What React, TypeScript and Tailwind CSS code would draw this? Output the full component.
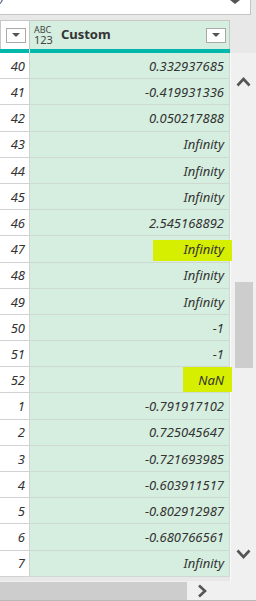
import React from "react";

const rows: { i: number; v: string; hl?: "inf" | "nan" }[] = [
  { i: 40, v: "0.332937685" },
  { i: 41, v: "-0.419931336" },
  { i: 42, v: "0.050217888" },
  { i: 43, v: "Infinity" },
  { i: 44, v: "Infinity" },
  { i: 45, v: "Infinity" },
  { i: 46, v: "2.545168892" },
  { i: 47, v: "Infinity", hl: "inf" },
  { i: 48, v: "Infinity" },
  { i: 49, v: "Infinity" },
  { i: 50, v: "-1" },
  { i: 51, v: "-1" },
  { i: 52, v: "NaN", hl: "nan" },
  { i: 1, v: "-0.791917102" },
  { i: 2, v: "0.725045647" },
  { i: 3, v: "-0.721693985" },
  { i: 4, v: "-0.603911517" },
  { i: 5, v: "-0.802912987" },
  { i: 6, v: "-0.680766561" },
  { i: 7, v: "Infinity" },
];

function DropButton() {
  return (
    <div className="flex h-[15px] w-[20px] items-center justify-center border border-[#a9a9a9] bg-white">
      <svg width="8" height="5" viewBox="0 0 8 5">
        <polygon points="0,0 8,0 4,4" fill="#555" />
      </svg>
    </div>
  );
}

function Chevron({ dir }: { dir: "up" | "down" | "right" }) {
  if (dir === "right") {
    return (
      <svg width="10" height="14" viewBox="0 0 10 14">
        <polyline points="2,1.5 8,7 2,12.5" fill="none" stroke="#555" strokeWidth="2.6" />
      </svg>
    );
  }
  return (
    <svg width="15" height="10" viewBox="0 0 15 10">
      <polyline
        points={dir === "up" ? "1.5,8.5 7.5,2 13.5,8.5" : "1.5,1.5 7.5,8 13.5,1.5"}
        fill="none"
        stroke="#555"
        strokeWidth="2.6"
      />
    </svg>
  );
}

export default function App() {
  return (
    <div
      className="flex h-[601px] w-[256px] flex-col overflow-hidden bg-[#e8e8e8] text-[#333]"
      style={{ fontFamily: '"Noto Sans", "Open Sans", sans-serif' }}
    >
      {/* formula bar remainder */}
      <div className="flex h-[15px] w-[251px] shrink-0 items-start justify-between overflow-hidden border-b border-r border-[#c4c4c4] bg-white">
        <span className="-mt-[9px] text-[13px] italic leading-none text-[#3a4a6a]">)</span>
        <svg width="10" height="4" viewBox="0 0 10 4" className="mr-[10px]">
          <polygon points="0,0 10,0 5,4" fill="#555" />
        </svg>
      </div>

      <div className="mt-[5px] flex flex-1">
        {/* table */}
        <div className="flex w-[230px] flex-col">
          <div className="flex h-[29px] border-t border-[#c8c8c8]">
            <div className="flex w-[30px] items-center justify-end border-r border-l border-[#c8c8c8] bg-white pr-[3px]">
              <DropButton />
            </div>
            <div className="flex flex-1 items-center border-r border-[#c8c8c8] bg-[#d5eedf] pr-[3px] pl-[4px]">
              <div className="flex flex-col text-[#444]">
                <span className="block h-[9px] text-[9px] leading-[9px]">ABC</span>
                <span className="mt-[1px] block h-[10px] text-[11px] leading-[10px]">123</span>
              </div>
              <span className="ml-[8px] flex-1 text-[13px] font-bold">Custom</span>
              <DropButton />
            </div>
          </div>
          <div className="flex h-[4px]">
            <div className="w-[29px] bg-[#01b8aa]" />
            <div className="w-[1px] bg-[#e6f4f2]" />
            <div className="flex-1 bg-[#01b8aa]" />
          </div>
          {rows.map((r) => (
            <div key={`${r.i}-${r.v}`} className="flex h-[26.2px] text-[13px] italic">
              <div className="flex w-[30px] items-center justify-end border-r border-b border-[#d2d2d2] bg-white pr-[4px] pt-[2px]">
                {r.i}
              </div>
              <div className="relative flex flex-1 items-center justify-end border-r border-b border-[#cfd8d2] bg-[#d5eedf] pr-[5px] pt-[2px]">
                {r.hl === "inf" && (
                  <span className="absolute top-[4px] right-[-3px] h-[21px] w-[79px] bg-[#d6ee00]" />
                )}
                {r.hl === "nan" && (
                  <span className="absolute top-[0px] right-[-3px] h-[25px] w-[49px] bg-[#d6ee00]" />
                )}
                <span className="relative">{r.v}</span>
              </div>
            </div>
          ))}
        </div>

        {/* vertical scrollbar */}
        <div className="flex w-[26px] flex-col">
          <div className="h-[33px]" />
          <div className="flex flex-1 flex-col items-center border-l border-[#fafafa] bg-[#f0f0f0]">
            <div className="flex h-[57px] items-center">
              <Chevron dir="up" />
            </div>
            <div className="mt-[172px] h-[86px] w-[18px] bg-[#cdcdcd]" />
            <div className="flex-1" />
            <div className="flex h-[54px] items-center">
              <Chevron dir="down" />
            </div>
          </div>
        </div>
      </div>

      {/* horizontal scrollbar */}
      <div className="flex h-[20px] shrink-0 items-center border-b border-[#b8b8b8] bg-[#f0f0f0]">
        <div className="h-[18px] w-[187px] bg-[#cdcdcd]" />
        <div className="ml-[10px]">
          <Chevron dir="right" />
        </div>
      </div>
    </div>
  );
}
